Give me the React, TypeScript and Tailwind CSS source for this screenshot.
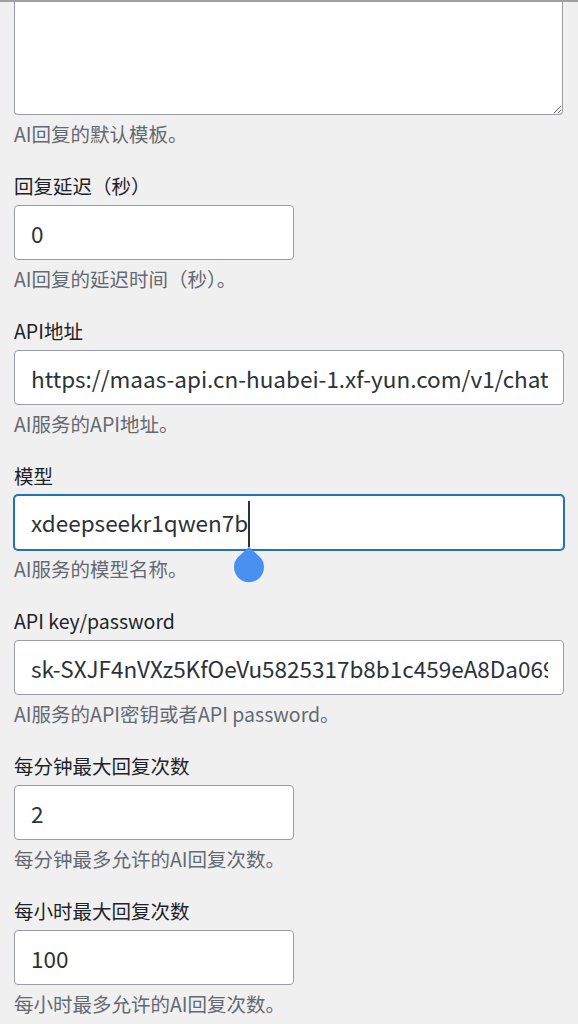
import React from "react";

function Label({ children }: { children: React.ReactNode }) {
  return <div className="text-[19.5px] leading-[26px] text-[#1d2327]">{children}</div>;
}

function Desc({ children }: { children: React.ReactNode }) {
  return <div className="mt-[6px] text-[19.5px] leading-[26px] text-[#646970]">{children}</div>;
}

function Field({
  label,
  value,
  desc,
  wide,
}: {
  label: string;
  value: string;
  desc: string;
  wide?: boolean;
}) {
  return (
    <div className="flex flex-col">
      <Label>{label}</Label>
      <input
        readOnly
        defaultValue={value}
        className={`mt-[6px] h-[55px] ${
          wide ? "w-full" : "w-[280px]"
        } rounded-[4px] border border-[#9a9da1] bg-white pl-[16px] pr-[15px] text-[22.5px] text-[#2c3338] outline-none`}
      />
      <Desc>{desc}</Desc>
    </div>
  );
}

export default function App() {
  return (
    <div className="min-h-screen border-t-2 border-[#a0a0a0] bg-[#f0f0f1] px-[14px] font-['Noto_Sans_CJK_SC','Noto_Sans',sans-serif]">
      <div className="flex flex-col gap-[26px] pb-10">
        <div className="flex flex-col">
          <textarea
            readOnly
            className="block h-[113px] w-[549px] rounded-b-[4px] border border-t-0 border-[#9a9da1] bg-white outline-none"
          />
          <Desc>AI回复的默认模板。</Desc>
        </div>

        <Field label="回复延迟（秒）" value="0" desc="AI回复的延迟时间（秒）。" />

        <Field
          wide
          label="API地址"
          value="https://maas-api.cn-huabei-1.xf-yun.com/v1/chat/completions"
          desc="AI服务的API地址。"
        />

        <div className="flex flex-col">
          <Label>模型</Label>
          <div className="mt-[6px] flex h-[55px] w-full items-center rounded-[4px] border border-[#2271b1] bg-white pl-[16px] text-[22.5px] text-[#2c3338] shadow-[0_0_0_1px_#2271b1]">
            <span>xdeepseekr1qwen7b</span>
            <span className="relative mt-[3px] inline-block h-[46px] w-[2px] bg-[#2c3338]">
              <svg
                className="absolute left-1/2 top-full -translate-x-1/2"
                width="32"
                height="36"
                viewBox="0 0 32 36"
              >
                <path d="M16 0 L27 10 A15 15 0 1 1 5 10 Z" fill="#4a90f0" />
              </svg>
            </span>
          </div>
          <Desc>AI服务的模型名称。</Desc>
        </div>

        <Field
          wide
          label="API key/password"
          value="sk-SXJF4nVXz5KfOeVu5825317b8b1c459eA8Da069e2a"
          desc="AI服务的API密钥或者API password。"
        />

        <Field label="每分钟最大回复次数" value="2" desc="每分钟最多允许的AI回复次数。" />

        <Field label="每小时最大回复次数" value="100" desc="每小时最多允许的AI回复次数。" />
      </div>
    </div>
  );
}
